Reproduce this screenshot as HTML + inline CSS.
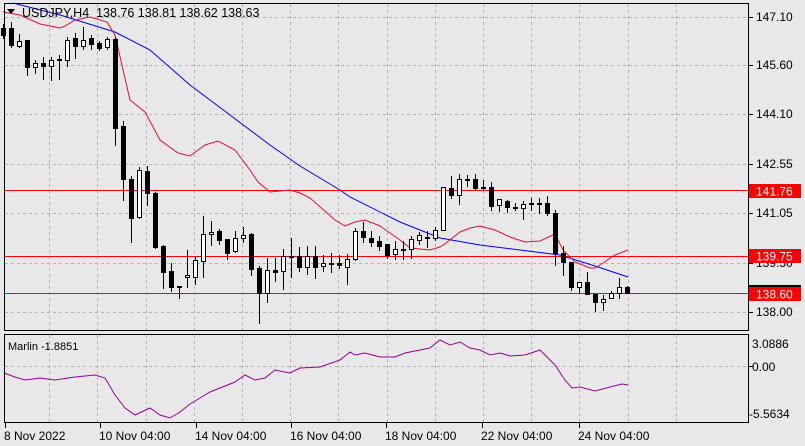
<!DOCTYPE html>
<html><head><meta charset="utf-8"><style>
html,body{margin:0;padding:0;background:#e8e8e8;width:805px;height:446px;overflow:hidden}
svg{display:block;font-family:"Liberation Sans",sans-serif}
</style></head><body>
<svg id="s" width="805" height="446" viewBox="0 0 805 446">
<rect width="805" height="446" fill="#e8e8e8"/>
<g id="grid" stroke="#b4b4b4" stroke-dasharray="3,3" stroke-width="1"></g>
<g stroke="#ff0000" stroke-width="1">
<line x1="4" y1="190.5" x2="748" y2="190.5"/>
<line x1="4" y1="256.5" x2="748" y2="256.5"/>
<line x1="4" y1="293.5" x2="748" y2="293.5"/>
</g>
<polyline fill="none" stroke="#0000ff" stroke-width="1" points="13,3 60,15 115,32 150,50 190,85 230,115 270,145 300,166 340,190 350,197 400,222 440,238 480,245 560,255 595,266 628,277"/>
<polyline fill="none" stroke="#e0103a" stroke-width="1" points="3,12 20,15 40,24 60,28 65,26 75,20 90,17 107,22 115,35 130,100 145,112 160,140 178,153 190,156 205,145 218,141 235,150 250,170 258,182 270,192 290,190 300,193 310,198 335,220 345,226 355,222 365,220 380,226 400,240 410,248 430,250 440,247 446,243 460,232 470,228 480,226 495,230 510,237 525,242 540,241 555,234 563,250 575,262 590,268 595,268 603,263 615,255 628,250"/>
<g id="candles"></g>
<polyline fill="none" stroke="#990099" stroke-width="1" points="4,373 15,377 25,380 40,378 55,380 75,377 95,375 105,378 115,395 125,408 135,415 150,408 160,415 170,418 180,412 190,404 200,398 210,392 220,388 235,382 245,375 255,380 265,378 275,370 290,373 300,368 320,367 340,360 350,352 355,355 365,353 380,357 395,357 405,353 420,350 430,348 440,340 450,345 460,342 470,348 480,350 490,355 500,353 510,356 525,355 540,350 555,365 565,380 572,388 580,387 595,391 610,387 622,384 628,385"/>
<rect x="4.5" y="3.5" width="744" height="327" fill="none" stroke="#000"/>
<rect x="4.5" y="334.5" width="744" height="88" fill="none" stroke="#000"/>
<path d="M7,9 L15,9 L11,14 Z" fill="#000"/>
<text x="22" y="17" font-size="12.5" fill="#000" style="white-space:pre">USDJPY,H4  138.76 138.81 138.62 138.63</text>
<text x="8" y="350" font-size="11" fill="#000">Marlin -1.8851</text>
<g font-size="12" fill="#000">
<text x="756" y="21">147.10</text>
<text x="756" y="69">145.60</text>
<text x="756" y="118">144.10</text>
<text x="756" y="168">142.55</text>
<text x="756" y="217">141.05</text>
<text x="756" y="267">139.50</text>
<text x="756" y="316">138.00</text>
<text x="752" y="348">3.0886</text>
<text x="752" y="371">0.00</text>
<text x="749" y="418">-5.5634</text>
</g>
<g stroke="#000"><line x1="749" y1="17.5" x2="753" y2="17.5"/><line x1="749" y1="65.5" x2="753" y2="65.5"/><line x1="749" y1="114.5" x2="753" y2="114.5"/><line x1="749" y1="164.5" x2="753" y2="164.5"/><line x1="749" y1="213.5" x2="753" y2="213.5"/><line x1="749" y1="263.5" x2="753" y2="263.5"/><line x1="749" y1="312.5" x2="753" y2="312.5"/><line x1="749" y1="366.5" x2="753" y2="366.5"/></g>
<rect x="749" y="184" width="52" height="14" fill="#ff0000"/><text x="756" y="195.5" font-size="12" fill="#fff">141.76</text>
<rect x="749" y="249" width="52" height="14" fill="#ff0000"/><text x="756" y="260.5" font-size="12" fill="#fff">139.75</text>
<rect x="749" y="285" width="52" height="2" fill="#000"/>
<rect x="749" y="287" width="52" height="14" fill="#ff0000"/><text x="756" y="298.5" font-size="12" fill="#fff">138.60</text>
<g font-size="12" fill="#000">
<text x="4" y="440">8 Nov 2022</text>
<text x="99" y="440">10 Nov 04:00</text>
<text x="195" y="440">14 Nov 04:00</text>
<text x="290" y="440">16 Nov 04:00</text>
<text x="385" y="440">18 Nov 04:00</text>
<text x="481" y="440">22 Nov 04:00</text>
<text x="578" y="440">24 Nov 04:00</text>
</g>
<g stroke="#000"><line x1="5.5" y1="423" x2="5.5" y2="428"/><line x1="100.5" y1="423" x2="100.5" y2="428"/><line x1="196.5" y1="423" x2="196.5" y2="428"/><line x1="291.5" y1="423" x2="291.5" y2="428"/><line x1="386.5" y1="423" x2="386.5" y2="428"/><line x1="482.5" y1="423" x2="482.5" y2="428"/><line x1="579.5" y1="423" x2="579.5" y2="428"/></g>
</svg>
<script>
var NS="http://www.w3.org/2000/svg";
function el(p,t,a){var e=document.createElementNS(NS,t);for(var k in a)e.setAttribute(k,a[k]);p.appendChild(e);return e;}
var g=document.getElementById("grid");
for(var k=0;k<15;k++){var x=Math.round(1+48.2*k)+0.5;if(x<6||x>747)continue;
el(g,"line",{x1:x,y1:4,x2:x,y2:330});el(g,"line",{x1:x,y1:335,x2:x,y2:422});}
[17,65,114,164,213,263,312].forEach(function(y){el(g,"line",{x1:5,y1:y+.5,x2:748,y2:y+.5});});
el(g,"line",{x1:5,y1:366.5,x2:748,y2:366.5});
var d=[
[28,35,24,38],
[28,45,22,47],[46,41,34,47],[40,67,40,75],[67,63,60,73],[63,66,57,79],[66,60,57,80],[59,60,55,79],[60,40,37,66],[38,46,33,58],[46,40,27,49],
[38,44,35,49],[43,48,41,50],[47,39,37,49],[39,128,37,145],[126,179,121,200],[179,218,176,242],[217,170,167,218],[171,193,166,205],[193,247,192,248],[246,272,245,288],
[271,287,263,291],[286,287,286,298],[277,275,250,287],[277,260,257,284],[261,234,216,277],[234,232,221,245],[231,240,229,244],[239,253,239,259],[251,238,231,252],[238,235,227,242],
[234,269,233,275],[268,293,266,323],[293,270,258,302],[270,272,258,281],[271,256,249,289],[256,257,238,277],[256,267,247,271],[267,256,246,274],[256,267,246,278],[266,263,255,271],
[263,264,253,272],[263,265,255,268],[267,259,254,284],[259,231,228,260],[231,237,222,242],[238,242,231,246],[241,246,236,250],[244,255,244,258],[254,249,241,259],[249,250,241,259],
[249,239,236,258],[240,235,232,244],[237,238,231,247],[238,230,227,240],[230,187,187,230],[188,195,176,198],[195,179,174,204],[179,180,175,186],[179,188,174,190],[187,188,180,190],
[187,206,182,210],[205,199,199,211],[201,207,200,212],[207,208,203,210],[208,204,201,219],[203,204,198,210],[203,204,198,213],[203,213,196,215],[213,253,210,265],[253,262,246,275],
[262,287,262,290],[287,282,282,292],[282,294,272,294],[294,302,294,311],[302,299,295,310],[298,293,291,298],[293,287,278,298],[287,293,286,293]
];
var c=document.getElementById("candles");
d.forEach(function(v,i){var x=3+8*i;var o=v[0],cl=v[1],h=v[2],l=v[3];
el(c,"line",{x1:x+.5,y1:h,x2:x+.5,y2:l+1,stroke:"#000"});
var top=Math.min(o,cl),bot=Math.max(o,cl);
if(bot-top<1){el(c,"line",{x1:x-2,y1:top+.5,x2:x+3,y2:top+.5,stroke:"#000"});}
else if(cl>o){el(c,"rect",{x:x-2,y:top,width:5,height:bot-top+1,fill:"#000"});}
else{el(c,"rect",{x:x-1.5,y:top+.5,width:4,height:bot-top,fill:"#fff",stroke:"#000"});}
});
</script>
</body></html>
